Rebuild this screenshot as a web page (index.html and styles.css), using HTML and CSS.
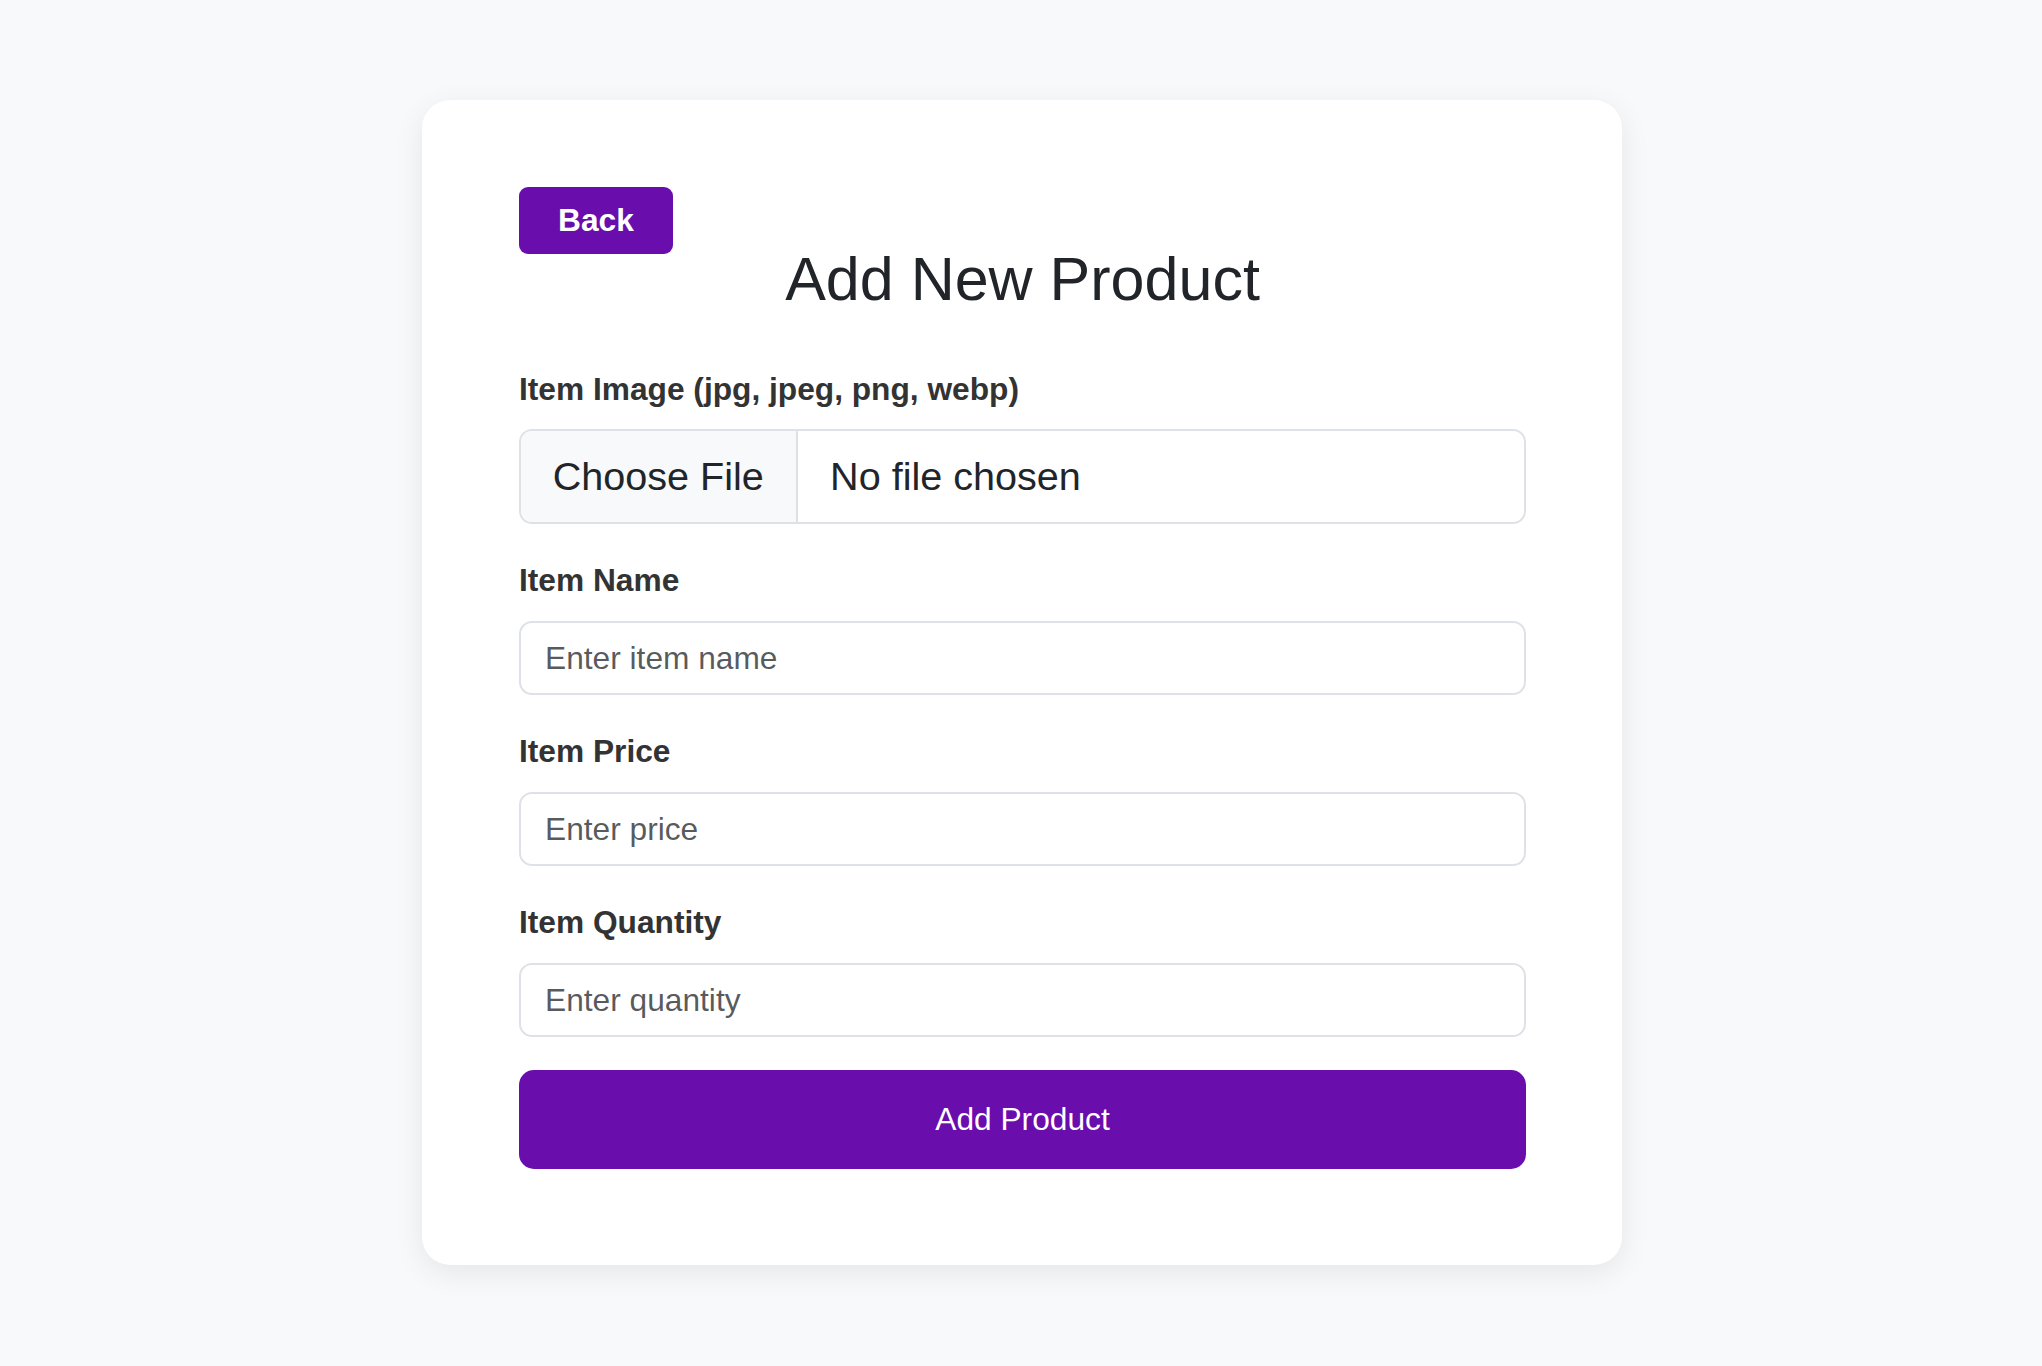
FILE: index.html
```html
<!DOCTYPE html>
<html lang="en">
<head>
<meta charset="utf-8">
<title>Add New Product</title>
<link rel="stylesheet" href="styles.css">
</head>
<body>
<main class="card">
  <button class="btn-back" type="button">Back</button>
  <h1 class="title">Add New Product</h1>
  <form class="form">
    <div class="group">
      <label class="label">Item Image (jpg, jpeg, png, webp)</label>
      <div class="file-input">
        <span class="file-btn">Choose File</span>
        <span class="file-name">No file chosen</span>
      </div>
    </div>
    <div class="group">
      <label class="label" for="name">Item Name</label>
      <input class="input" id="name" type="text" placeholder="Enter item name">
    </div>
    <div class="group">
      <label class="label" for="price">Item Price</label>
      <input class="input" id="price" type="text" placeholder="Enter price">
    </div>
    <div class="group">
      <label class="label" for="qty">Item Quantity</label>
      <input class="input" id="qty" type="text" placeholder="Enter quantity">
    </div>
    <button class="btn-submit" type="button">Add Product</button>
  </form>
</main>
</body>
</html>
```
FILE: styles.css
```css
* { box-sizing: border-box; }

html, body {
  margin: 0;
  padding: 0;
}

body {
  background: #f8f9fa;
  font-family: "Liberation Sans", Arial, sans-serif;
  color: #212529;
  min-height: 1366px;
  padding-top: 100px;
}

.card {
  width: 1200px;
  margin: 0 0 0 calc(50% - 599px);
  background: #ffffff;
  border-radius: 28px;
  box-shadow: 0 8px 30px rgba(0, 0, 0, 0.08);
  padding: 87px 96px 96px 97px;
}

.btn-back {
  display: block;
  background: #6a0dad;
  color: #ffffff;
  border: none;
  border-radius: 9px;
  font-family: "Liberation Sans", Arial, sans-serif;
  font-weight: 700;
  font-size: 31.7px;
  line-height: 47.5px;
  padding: 9.75px 39px;
  cursor: pointer;
}

.title {
  margin: -10.7px 0 49.4px;
  font-size: 61px;
  line-height: 1.2;
  font-weight: 400;
  text-align: center;
  color: #212529;
}

.form {
  display: flex;
  flex-direction: column;
  gap: 33px;
}

.group {
  display: flex;
  flex-direction: column;
}

.label {
  display: block;
  font-weight: 700;
  font-size: 31.7px;
  line-height: 1.5;
  color: #333333;
  margin-bottom: 15.9px;
}

.file-input {
  display: flex;
  align-items: stretch;
  height: 95px;
  border: 2px solid #dee2e6;
  border-radius: 13px;
  overflow: hidden;
  font-size: 39.6px;
  line-height: 1.5;
  color: #212529;
}

.file-btn {
  display: flex;
  align-items: center;
  background: #f8f9fa;
  padding: 0 31.7px;
  border-right: 2px solid #dee2e6;
}

.file-name {
  display: flex;
  align-items: center;
  padding-left: 32.5px;
}

.input {
  display: block;
  width: 100%;
  font-family: "Liberation Sans", Arial, sans-serif;
  font-size: 31.7px;
  line-height: 1.5;
  padding: 12px 24px 11px;
  border: 2px solid #dee2e6;
  border-radius: 13px;
  color: #212529;
  background: #ffffff;
  outline: none;
}

.input::placeholder {
  color: rgba(33, 37, 41, 0.75);
  opacity: 1;
}

.btn-submit {
  display: block;
  width: 100%;
  height: 99px;
  background: #6a0dad;
  color: #ffffff;
  border: none;
  border-radius: 15px;
  font-family: "Liberation Sans", Arial, sans-serif;
  font-size: 31.7px;
  line-height: 1.5;
  cursor: pointer;
}
```
